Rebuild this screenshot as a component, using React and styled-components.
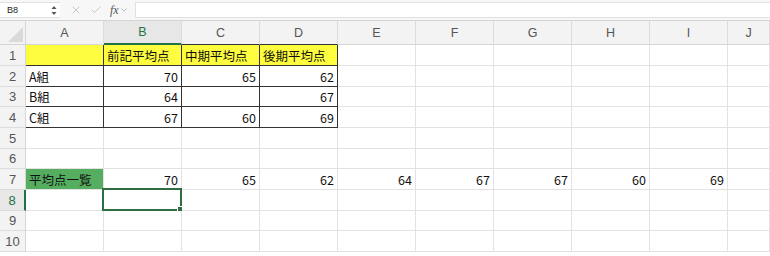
import React from 'react';
import styled, { createGlobalStyle } from 'styled-components';
import { X, Check } from 'lucide-react';

const GlobalStyle = createGlobalStyle`
  html, body {
    margin: 0;
    padding: 0;
    background: #fff;
  }
  body {
    font-family: "Noto Sans CJK JP", "Liberation Sans", sans-serif;
  }
`;

const Page = styled.div`
  width: 770px;
  height: 256px;
  overflow: hidden;
  background: #fff;
`;

const FormulaBar = styled.div`
  height: 21px;
  display: flex;
  align-items: center;
  background: #f7f7f7;
  border-bottom: 1px solid #d4d4d4;
  box-sizing: border-box;
`;

const NameBox = styled.div`
  width: 60px;
  height: 16px;
  display: flex;
  align-items: center;
  justify-content: space-between;
  background: #fff;
  border-top: 1px solid #e0e0e0;
  border-bottom: 1px solid #e0e0e0;
  box-sizing: border-box;
  padding: 0 3px 0 7px;
  font-family: "Liberation Sans", sans-serif;
  font-size: 9px;
  color: #222;
`;

const ToolIcons = styled.div`
  width: 65px;
  display: flex;
  align-items: center;
  gap: 8px;
  padding-left: 10px;
  color: #b5b5b5;
`;

const Fx = styled.span`
  font-family: "Liberation Serif", serif;
  font-style: italic;
  font-size: 12px;
  color: #555;
  display: flex;
  align-items: center;
  gap: 2px;
`;

const FormulaInput = styled.div`
  flex: 1;
  height: 16px;
  background: #fff;
  border: 1px solid #e0e0e0;
  border-right: none;
  box-sizing: border-box;
`;

const Grid = styled.div`
  display: grid;
  grid-template-columns: 26px repeat(9, 78px) 1fr;
  grid-template-rows: 24px 21px 21px 20px 21px 21px 20px 21px 21px 20px 21px;
`;

const Corner = styled.div`
  background: #f3f3f3;
  border-right: 1px solid #d6d6d6;
  border-bottom: 1px solid #d6d6d6;
  box-sizing: border-box;
  position: relative;
  &::after {
    content: '';
    position: absolute;
    right: 2px;
    bottom: 2px;
    border-style: solid;
    border-width: 0 0 15px 15px;
    border-color: transparent transparent #dadada transparent;
  }
`;

const ColHead = styled.div`
  background: ${(p) => (p.$active ? '#e7e7e7' : '#f3f3f3')};
  color: ${(p) => (p.$active ? '#217346' : '#555')};
  border-right: 1px solid #dcdcdc;
  border-bottom: ${(p) => p.$bottom || '1px solid #d6d6d6'};
  box-sizing: border-box;
  display: flex;
  align-items: center;
  justify-content: center;
  font-family: "Liberation Sans", sans-serif;
  font-size: 12.5px;
`;

const RowHead = styled.div`
  background: ${(p) => (p.$active ? '#e7e7e7' : '#f3f3f3')};
  color: ${(p) => (p.$active ? '#217346' : '#555')};
  border-right: ${(p) => (p.$active ? '2px solid #217346' : '1px solid #d6d6d6')};
  border-bottom: 1px solid #dcdcdc;
  box-sizing: border-box;
  display: flex;
  align-items: center;
  justify-content: center;
  font-family: "Liberation Sans", sans-serif;
  font-size: 13px;
`;

const Cell = styled.div`
  position: relative;
  box-sizing: border-box;
  background: ${(p) => p.$fill || '#fff'};
  border-right: 1px solid ${(p) => p.$right || '#e2e2e2'};
  border-bottom: 1px solid ${(p) => p.$bottom || '#e2e2e2'};
  display: flex;
  align-items: center;
  justify-content: ${(p) => (p.$num ? 'flex-end' : 'flex-start')};
  padding: 0 3px;
  font-size: 12.5px;
  color: #111;
  white-space: nowrap;
`;

const Selection = styled.div`
  position: absolute;
  left: -2px;
  top: -2px;
  right: -1px;
  bottom: -1px;
  border: 2px solid #2f6d43;
  pointer-events: none;
  &::after {
    content: '';
    position: absolute;
    right: -4px;
    bottom: -4px;
    width: 5px;
    height: 5px;
    background: #2f6d43;
    border: 1px solid #fff;
  }
`;

const Stepper = () => (
  <svg width="6" height="11" viewBox="0 0 6 11">
    <path d="M0.5 4 L3 1 L5.5 4 Z" fill="#555" />
    <path d="M0.5 7 L3 10 L5.5 7 Z" fill="#555" />
  </svg>
);

const Chevron = () => (
  <svg width="6" height="4" viewBox="0 0 6 4">
    <path d="M0.5 0.5 L3 3.2 L5.5 0.5" fill="none" stroke="#b0b0b0" strokeWidth="0.9" />
  </svg>
);

const DARK = '#333';
const YELLOW = '#fdfc3e';
const GREEN = '#55ad5f';

const columns = ['A', 'B', 'C', 'D', 'E', 'F', 'G', 'H', 'I', 'J'];

// cell contents and formats by "row:col"
const cells = {
  '1:A': { fill: YELLOW, right: DARK, bottom: DARK },
  '1:B': { text: '前記平均点', fill: YELLOW, right: DARK, bottom: DARK },
  '1:C': { text: '中期平均点', fill: YELLOW, right: DARK, bottom: DARK },
  '1:D': { text: '後期平均点', fill: YELLOW, right: DARK, bottom: DARK },
  '2:A': { text: 'A組', right: DARK, bottom: DARK },
  '2:B': { text: '70', num: true, right: DARK, bottom: DARK },
  '2:C': { text: '65', num: true, right: DARK, bottom: DARK },
  '2:D': { text: '62', num: true, right: DARK, bottom: DARK },
  '3:A': { text: 'B組', right: DARK, bottom: DARK },
  '3:B': { text: '64', num: true, right: DARK, bottom: DARK },
  '3:C': { right: DARK, bottom: DARK },
  '3:D': { text: '67', num: true, right: DARK, bottom: DARK },
  '4:A': { text: 'C組', right: DARK, bottom: DARK },
  '4:B': { text: '67', num: true, right: DARK, bottom: DARK },
  '4:C': { text: '60', num: true, right: DARK, bottom: DARK },
  '4:D': { text: '69', num: true, right: DARK, bottom: DARK },
  '7:A': { text: '平均点一覧', fill: GREEN },
  '7:B': { text: '70', num: true },
  '7:C': { text: '65', num: true },
  '7:D': { text: '62', num: true },
  '7:E': { text: '64', num: true },
  '7:F': { text: '67', num: true },
  '7:G': { text: '67', num: true },
  '7:H': { text: '60', num: true },
  '7:I': { text: '69', num: true },
};

const headBottom = {
  B: '2px solid #217346',
  C: `1px solid ${DARK}`,
  D: `1px solid ${DARK}`,
};

const App = () => (
  <>
    <GlobalStyle />
    <Page>
      <FormulaBar>
        <NameBox>
          <span>B8</span>
          <Stepper />
        </NameBox>
        <ToolIcons>
          <X size={12} strokeWidth={1.4} />
          <Check size={12} strokeWidth={1.4} />
          <Fx>
            fx
            <Chevron />
          </Fx>
        </ToolIcons>
        <FormulaInput />
      </FormulaBar>
      <Grid>
        <Corner />
        {columns.map((c) => (
          <ColHead key={c} $active={c === 'B'} $bottom={headBottom[c]}>
            {c}
          </ColHead>
        ))}
        {Array.from({ length: 10 }, (_, i) => i + 1).map((r) => (
          <React.Fragment key={r}>
            <RowHead $active={r === 8}>{r}</RowHead>
            {columns.map((c) => {
              const d = cells[`${r}:${c}`] || {};
              return (
                <Cell
                  key={c}
                  $fill={d.fill}
                  $right={d.right}
                  $bottom={d.bottom}
                  $num={d.num}
                >
                  {d.text}
                  {r === 8 && c === 'B' && <Selection />}
                </Cell>
              );
            })}
          </React.Fragment>
        ))}
      </Grid>
    </Page>
  </>
);

export default App;
